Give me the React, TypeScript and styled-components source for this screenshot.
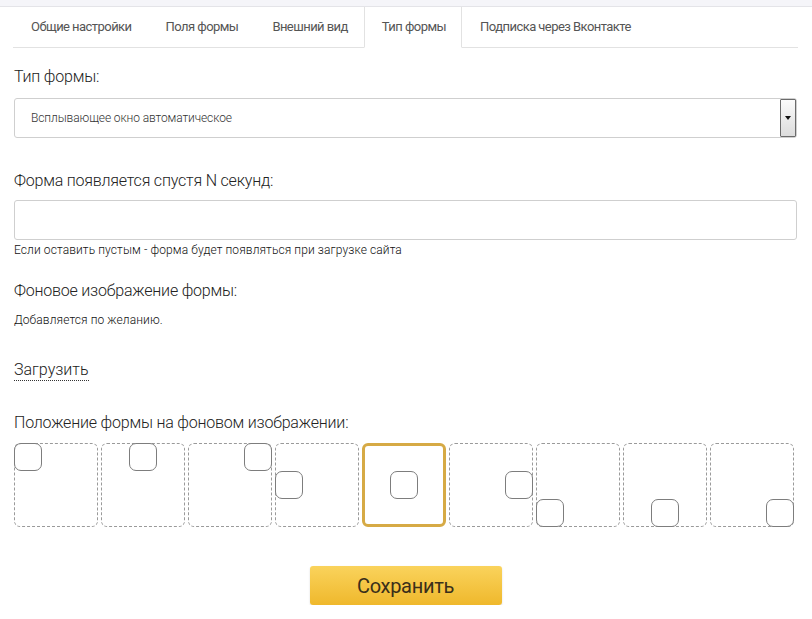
import React, { useState } from 'react';
import styled, { createGlobalStyle } from 'styled-components';

// STYLES

const GlobalStyle = createGlobalStyle`
  html, body {
    margin: 0;
    padding: 0;
    background: #fff;
    font-family: Roboto, "Liberation Sans", Arial, sans-serif;
    color: #333;
  }
`
const TopStrip = styled.div`
  height: 6px;
  background: #f5f5f9;
  border-bottom: 1px solid #e4e4e8;
`
const Tabs = styled.ul`
  display: flex;
  list-style: none;
  margin: 0 14px 0 13px;
  padding: 0;
  height: 40px;
  border-bottom: 1px solid #e2e2e2;
`
const Tab = styled.li<{ $active?: boolean }>`
  padding: 0 15px 0 17px;
  line-height: 40px;
  font-size: 13px;
  color: #555;
  letter-spacing: -0.55px;
  cursor: pointer;
  border: 1px solid ${p => (p.$active ? '#e2e2e2' : 'transparent')};
  border-top: none;
  border-bottom: ${p => (p.$active ? '1px solid #fff' : 'none')};
  background: ${p => (p.$active ? '#fff' : 'transparent')};
  box-sizing: border-box;
  height: ${p => (p.$active ? '41px' : '40px')};
`
const Content = styled.div`
  padding: 19px 15px 0 14px;
  display: flex;
  flex-direction: column;
`
const Label = styled.div<{ $gap?: number }>`
  font-size: 16px;
  font-weight: 300;
  line-height: 20px;
  color: #222;
  letter-spacing: -0.2px;
  margin-top: ${p => p.$gap ?? 0}px;
`
const SelectWrap = styled.div`
  position: relative;
  margin-top: 11px;
  height: 40px;
  border: 1px solid #cfcfcf;
  border-radius: 3px;
  box-sizing: border-box;
  display: flex;
  align-items: center;
  padding-left: 16px;
  font-size: 12px;
  font-weight: 300;
  color: #333;
  letter-spacing: -0.1px;
`
const SelectArrow = styled.span`
  position: absolute;
  right: 0;
  top: 0;
  bottom: 0;
  width: 16px;
  box-sizing: border-box;
  border: 1px solid #6b6b6b;
  border-radius: 1px;
  background: linear-gradient(#fbfbfb, #dcdcdc);
  display: flex;
  align-items: center;
  justify-content: center;

  &::after {
    content: '';
    border-left: 3px solid transparent;
    border-right: 3px solid transparent;
    border-top: 4px solid #111;
  }
`
const TextInput = styled.input`
  margin-top: 9px;
  height: 40px;
  border: 1px solid #cfcfcf;
  border-radius: 3px;
  box-sizing: border-box;
  padding: 0 16px;
  font-size: 13px;
  outline: none;
`
const Hint = styled.div<{ $gap?: number }>`
  font-size: 12px;
  font-weight: 300;
  line-height: 16px;
  color: #111;
  letter-spacing: 0.1px;
  margin-top: ${p => p.$gap ?? 0}px;
`
const UploadLink = styled.a`
  align-self: flex-start;
  margin-top: 32px;
  font-size: 16px;
  font-weight: 300;
  line-height: 20px;
  color: #222;
  text-decoration: none;
  border-bottom: 1px dotted #333;
  cursor: pointer;
`
const Positions = styled.div`
  display: grid;
  grid-template-columns: repeat(9, 84px);
  column-gap: 3px;
  margin-top: 10px;
`
const PosBox = styled.div<{ $active?: boolean; $h: string; $v: string }>`
  height: 84px;
  box-sizing: border-box;
  border: ${p => (p.$active ? '3px solid #d6aa45' : '1px dashed #9a9a9a')};
  border-radius: 6px;
  display: flex;
  justify-content: ${p => p.$h};
  align-items: ${p => p.$v};
  cursor: pointer;
`
const Mini = styled.span<{ $active?: boolean }>`
  width: 28px;
  height: 28px;
  box-sizing: border-box;
  border: 1px solid #7d7d7d;
  border-radius: 7px;
  background: #fff;
  margin: ${p => (p.$active ? '0' : '-1px')};
`
const SaveRow = styled.div`
  display: flex;
  justify-content: center;
  margin-top: 39px;
`
const SaveButton = styled.button`
  width: 192px;
  height: 39px;
  border: none;
  border-radius: 3px;
  background: linear-gradient(#fad35c, #efb82c);
  box-shadow: 0 1px 2px rgba(0, 0, 0, 0.15);
  font-family: Roboto, "Liberation Sans", Arial, sans-serif;
  font-size: 20px;
  font-weight: 400;
  color: #3a2f1a;
  letter-spacing: -0.3px;
  cursor: pointer;
`

////////////////////////////////////////////////////////////////////////////////

const tabs = ['Общие настройки', 'Поля формы', 'Внешний вид', 'Тип формы', 'Подписка через Вконтакте']

const positions: { h: string; v: string }[] = [
  { h: 'flex-start', v: 'flex-start' },
  { h: 'center', v: 'flex-start' },
  { h: 'flex-end', v: 'flex-start' },
  { h: 'flex-start', v: 'center' },
  { h: 'center', v: 'center' },
  { h: 'flex-end', v: 'center' },
  { h: 'flex-start', v: 'flex-end' },
  { h: 'center', v: 'flex-end' },
  { h: 'flex-end', v: 'flex-end' },
]

export default function App() {
  const [activeTab, setActiveTab] = useState(3)
  const [pos, setPos] = useState(4)

  return (
    <>
      <GlobalStyle />
      <TopStrip />
      <Tabs>
        {tabs.map((t, i) => (
          <Tab key={t} $active={i === activeTab} onClick={() => setActiveTab(i)}>{t}</Tab>
        ))}
      </Tabs>
      <Content>
        <Label>Тип формы:</Label>
        <SelectWrap>
          Всплывающее окно автоматическое
          <SelectArrow />
        </SelectWrap>

        <Label $gap={33}>Форма появляется спустя N секунд:</Label>
        <TextInput />
        <Hint $gap={2}>Если оставить пустым - форма будет появляться при загрузке сайта</Hint>

        <Label $gap={23}>Фоновое изображение формы:</Label>
        <Hint $gap={11}>Добавляется по желанию.</Hint>

        <UploadLink>Загрузить</UploadLink>

        <Label $gap={32}>Положение формы на фоновом изображении:</Label>
        <Positions>
          {positions.map((p, i) => (
            <PosBox key={i} $active={i === pos} $h={p.h} $v={p.v} onClick={() => setPos(i)}>
              <Mini $active={i === pos} />
            </PosBox>
          ))}
        </Positions>

        <SaveRow>
          <SaveButton>Сохранить</SaveButton>
        </SaveRow>
      </Content>
    </>
  )
}
